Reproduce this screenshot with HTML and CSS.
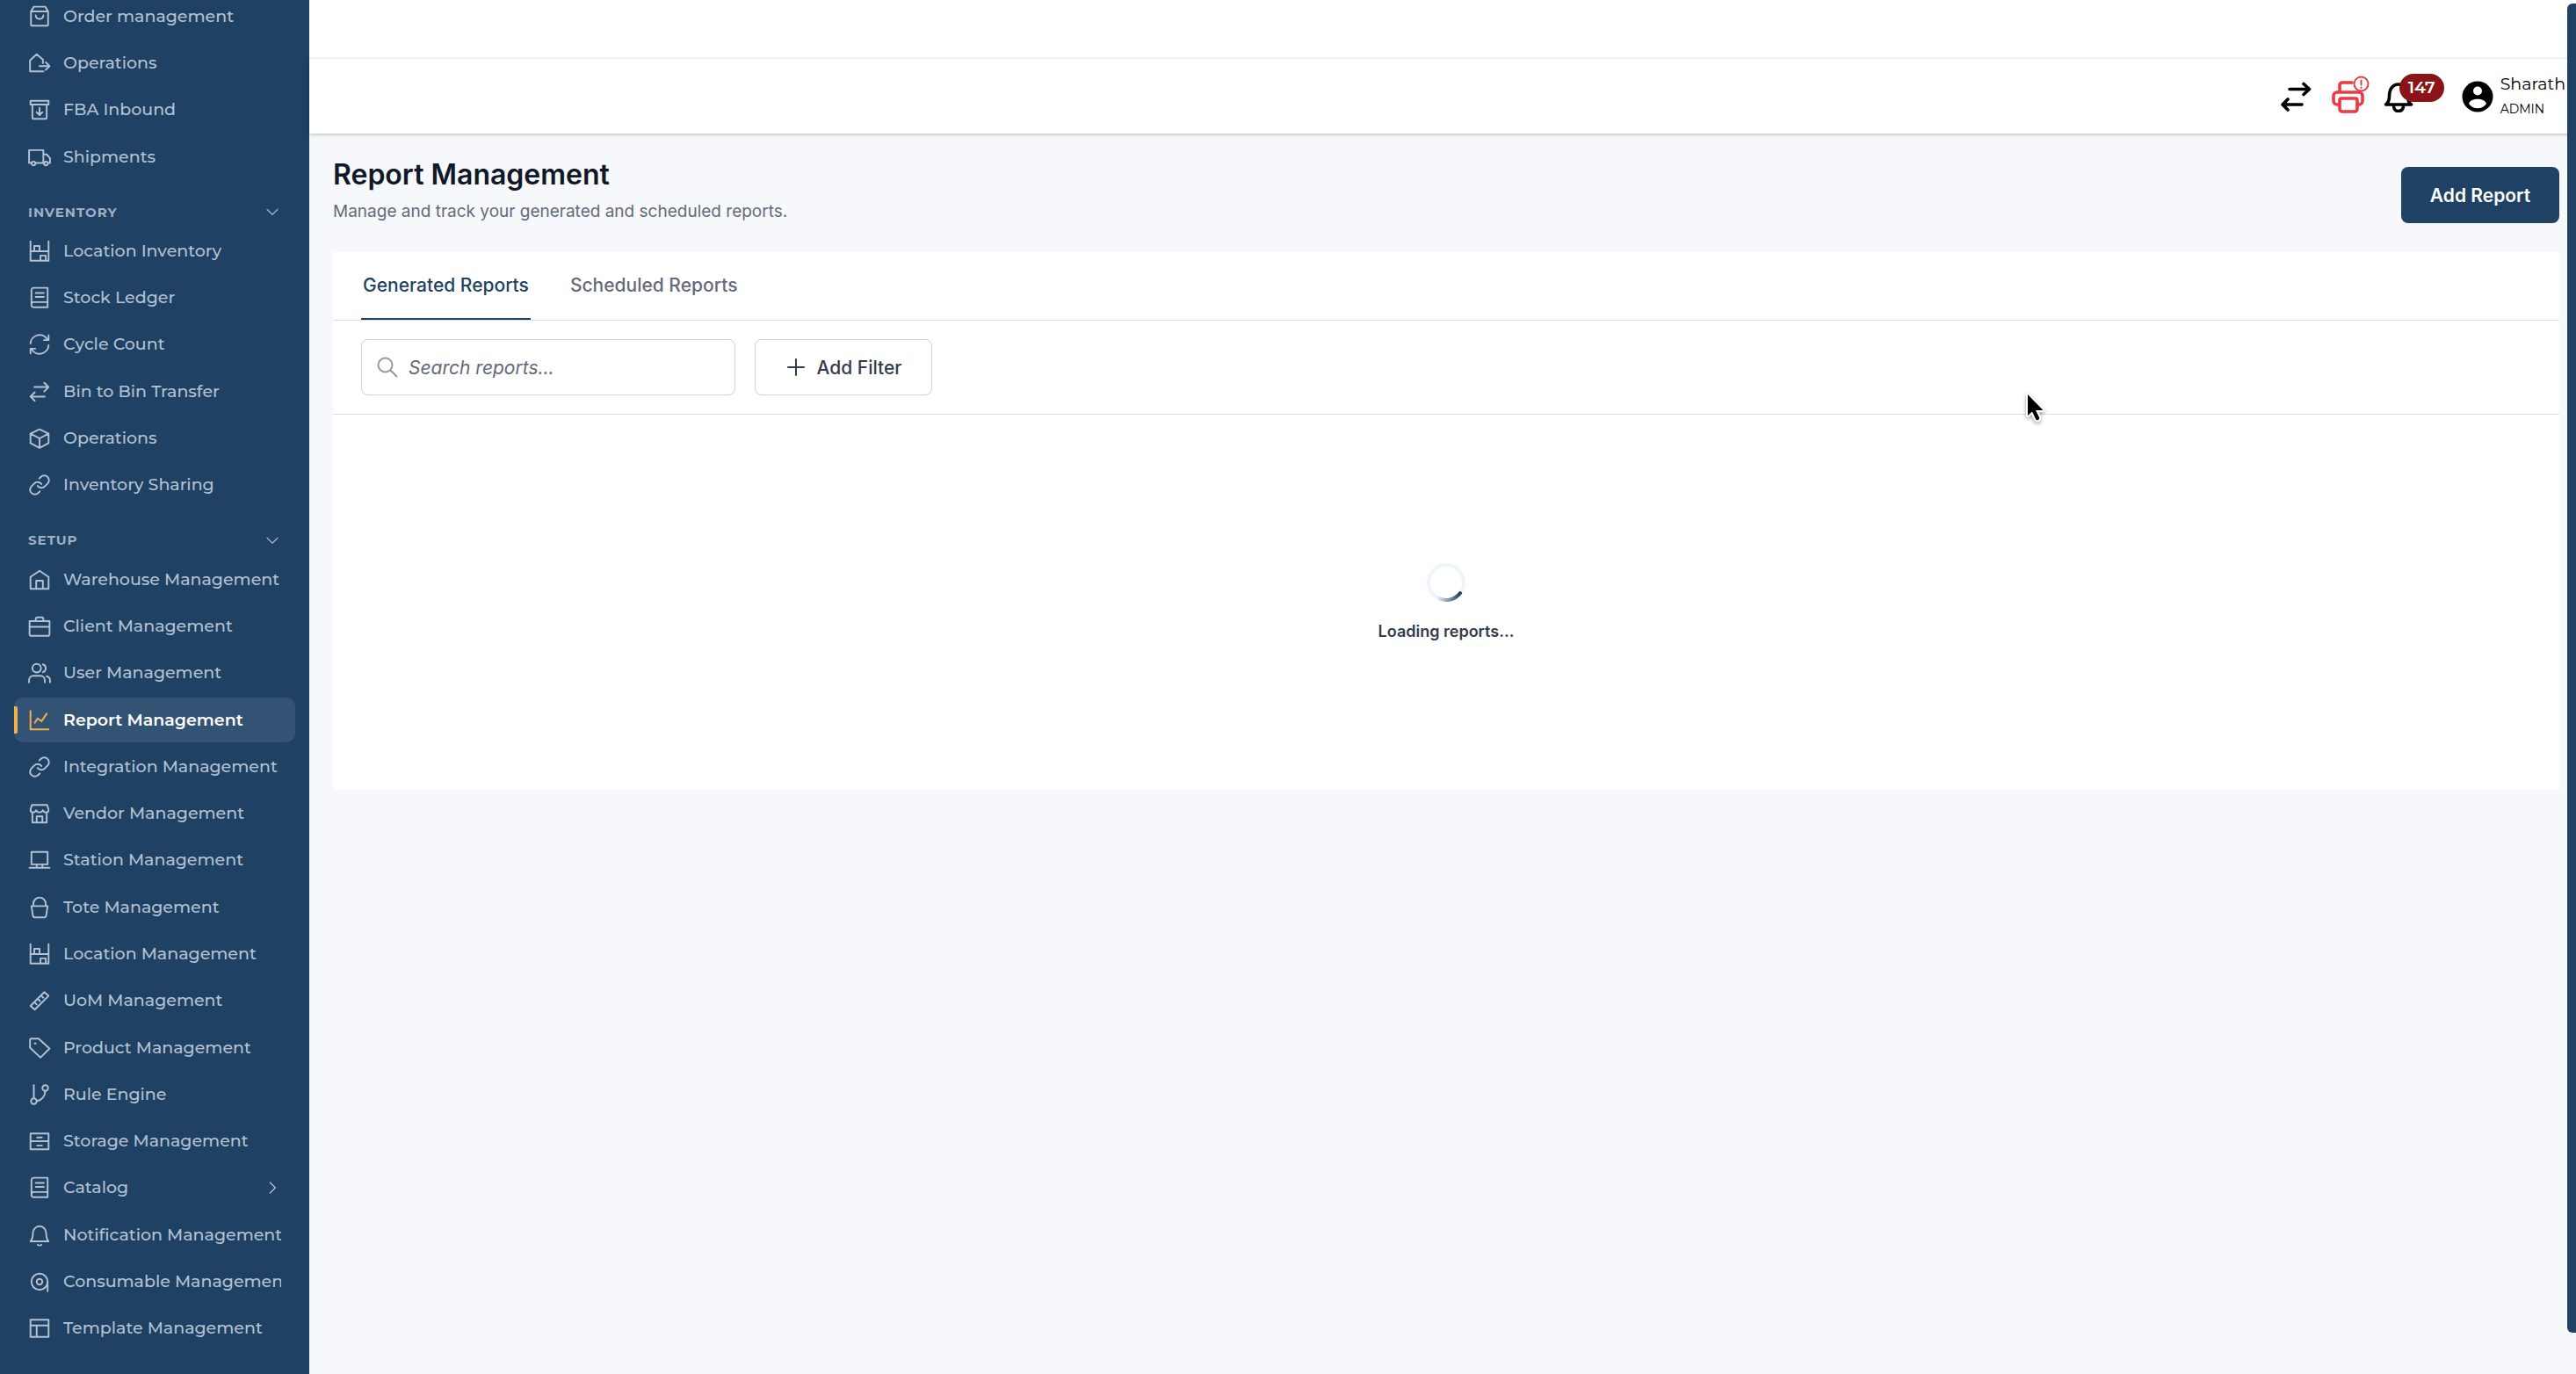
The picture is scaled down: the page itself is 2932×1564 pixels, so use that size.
FILE: index.html
```html
<!DOCTYPE html>
<html lang="en">
<head>
<meta charset="utf-8">
<meta name="viewport" content="width=device-width, initial-scale=1">
<title>Report Management</title>
<link rel="stylesheet" href="styles.css">
</head>
<body>
<svg class="sprite" aria-hidden="true">
  <symbol id="i-bag" viewBox="0 0 24 24"><path d="M3 6.500V20a1.500 1.500 0 0 0 1.500 1.500h15a1.500 1.500 0 0 0 1.500-1.500V6.500zM3 6.500l3-5h12l3 5M8 10.500c0 5 8 5 8 0"/></symbol>
  <symbol id="i-house-out" viewBox="0 0 24 24"><path d="M16 20.500H2V9l7-6.500L15.500 8v4M12 15h10.500M18.500 11l4 4-4 4"/></symbol>
  <symbol id="i-inbound" viewBox="0 0 24 24"><path d="M2.500 2.500h19v4h-19zM4.500 6.500V20a1.500 1.500 0 0 0 1.500 1.500h12a1.500 1.500 0 0 0 1.500-1.500V6.500M12 10v7M9 14.500l3 3 3-3"/></symbol>
  <symbol id="i-truck" viewBox="0 0 24 24"><path d="M4 18H1V4.500h15V18H7.500M16 9h3.500l3.500 4v5h-2M17.500 18H16"/><circle cx="5.700" cy="18.500" r="2"/><circle cx="18.700" cy="18.500" r="2"/></symbol>
  <symbol id="i-rack" viewBox="0 0 24 24"><path d="M2.500 1.500v20.500h19V1.500M2.500 12h19M6.500 12V6.500h5.500V12M13 22v-5.500h5.500V22"/></symbol>
  <symbol id="i-book" viewBox="0 0 24 24"><path d="M20.500 16.500H6a2.500 2.500 0 0 0-2.500 2.500V4A2.500 2.500 0 0 1 6 1.500h14.500zM3.500 19A2.500 2.500 0 0 0 6 22h14.500v-5.500M8 7h8.500M8 11h8.500"/></symbol>
  <symbol id="i-cycle" viewBox="0 0 24 24"><path d="M2.500 11a9.500 9.500 0 0 1 17.500-4.500M21.500 13A9.500 9.500 0 0 1 4 17.500M21.500 2.500v5h-5M2.500 21.500v-5h5"/></symbol>
  <symbol id="i-swap" viewBox="0 0 24 24"><path d="M6.500 7h15M17 2.500 21.500 7 17 11.500M17.500 17h-15M7 12.500 2.500 17 7 21.500"/></symbol>
  <symbol id="i-box" viewBox="0 0 24 24"><path d="M12 2.500l9.500 4.500v10L12 22l-9.500-5V7zM2.500 7l9.500 5 9.500-5M12 12v10"/></symbol>
  <symbol id="i-link" viewBox="0 0 24 24"><path d="M10 13a5 5 0 0 0 7.540.540l3-3a5 5 0 0 0-7.070-7.070l-1.720 1.710M14 11a5 5 0 0 0-7.540-.540l-3 3a5 5 0 0 0 7.070 7.070l1.710-1.710"/></symbol>
  <symbol id="i-home" viewBox="0 0 24 24"><path d="M2.500 9 12 2.500 21.500 9v12.500h-19zM8.500 21.500V13h7v8.500"/></symbol>
  <symbol id="i-case" viewBox="0 0 24 24"><path d="M1.500 6.500h21V20a2 2 0 0 1-2 2h-17a2 2 0 0 1-2-2zM1.500 12.500h21M8 6.500V4a1.500 1.500 0 0 1 1.500-1.500h5A1.500 1.500 0 0 1 16 4v2.500"/></symbol>
  <symbol id="i-users" viewBox="0 0 24 24"><circle cx="9" cy="7" r="4.500"/><path d="M1 22v-2.500a4.500 4.500 0 0 1 4.500-4.500h7.500a4.500 4.500 0 0 1 4.500 4.500V22M15.500 3a4.300 4.300 0 0 1 0 8.200M19.500 15.500a4.500 4.500 0 0 1 3.500 4.500v2"/></symbol>
  <symbol id="i-chart" viewBox="0 0 24 24"><path d="M2.500 2v19.500h19M7 14.500l3-4.500 4 3L19.500 5"/></symbol>
  <symbol id="i-store" viewBox="0 0 24 24"><path d="M4 3h16l1.500 5c0 3.500-4.500 4-6 .500-1 3-6 3-7 0-1.500 3.500-6 3-6-.500zM4.500 11v10.500h15V11M9 21.500V15h6v6.500"/></symbol>
  <symbol id="i-station" viewBox="0 0 24 24"><path d="M3.500 3.500h17v13h-17zM1.500 20h21M9 16.500V20M15 16.500V20"/></symbol>
  <symbol id="i-tote" viewBox="0 0 24 24"><path d="M3.500 10.500h17L19 20.500a2 2 0 0 1-2 1.800H7a2 2 0 0 1-2-1.800zM5.500 10.500V8a6.500 6.500 0 0 1 13 0v2.500"/></symbol>
  <symbol id="i-ruler" viewBox="0 0 24 24"><path d="M2.500 17.500 17 3l4.500 4L7 21.500zM7 14l2 2M10.500 10.500l2 2M14 7l2 2"/></symbol>
  <symbol id="i-tag" viewBox="0 0 24 24"><path d="M2 3.500A1.500 1.500 0 0 1 3.500 2H11l11.500 10.500-9.500 9.500L2 11.500zM7 7.200h1"/></symbol>
  <symbol id="i-branch" viewBox="0 0 24 24"><path d="M6 2v14"/><circle cx="6" cy="19" r="3"/><circle cx="18" cy="5" r="3"/><path d="M18 8a11 11 0 0 1-9 11"/></symbol>
  <symbol id="i-drawers" viewBox="0 0 24 24"><path d="M2.500 4h19v8h-19zM2.500 12h19v8.500h-19zM9.500 8h5M9.500 16.500h5"/></symbol>
  <symbol id="i-bell" viewBox="0 0 24 24"><path d="M2.500 18.500c2-2 2.500-4 2.500-8.500a7 7.500 0 0 1 14 0c0 4.500.500 6.500 2.500 8.500zM10 22c1 1 3 1 4 0"/></symbol>
  <symbol id="i-roll" viewBox="0 0 24 24"><circle cx="12" cy="12" r="8.500"/><circle cx="12" cy="12" r="3"/><path d="M20.500 12v10"/></symbol>
  <symbol id="i-layout" viewBox="0 0 24 24"><path d="M2.500 3h19v18h-19zM2.500 9h19M9 9v12"/></symbol>
  <symbol id="i-down" viewBox="0 0 24 24"><path d="M3 8l9 9 9-9"/></symbol>
  <symbol id="i-right" viewBox="0 0 24 24"><path d="M8 3l9 9-9 9"/></symbol>
</svg>

<div class="app">
  <nav class="sidebar" aria-label="Main">
    <ul class="nav-list nav-orders">
      <li><a class="nav-item" href="#"><svg><use href="#i-bag"/></svg><span>Order management</span></a></li>
      <li><a class="nav-item" href="#"><svg><use href="#i-house-out"/></svg><span>Operations</span></a></li>
      <li><a class="nav-item" href="#"><svg><use href="#i-inbound"/></svg><span>FBA Inbound</span></a></li>
      <li><a class="nav-item" href="#"><svg><use href="#i-truck"/></svg><span>Shipments</span></a></li>
    </ul>
    <button class="nav-heading" type="button" aria-expanded="true">INVENTORY<svg><use href="#i-down"/></svg></button>
    <ul class="nav-list nav-inventory">
      <li><a class="nav-item" href="#"><svg><use href="#i-rack"/></svg><span>Location Inventory</span></a></li>
      <li><a class="nav-item" href="#"><svg><use href="#i-book"/></svg><span>Stock Ledger</span></a></li>
      <li><a class="nav-item" href="#"><svg><use href="#i-cycle"/></svg><span>Cycle Count</span></a></li>
      <li><a class="nav-item" href="#"><svg><use href="#i-swap"/></svg><span>Bin to Bin Transfer</span></a></li>
      <li><a class="nav-item" href="#"><svg><use href="#i-box"/></svg><span>Operations</span></a></li>
      <li><a class="nav-item" href="#"><svg><use href="#i-link"/></svg><span>Inventory Sharing</span></a></li>
    </ul>
    <button class="nav-heading" type="button" aria-expanded="true">SETUP<svg><use href="#i-down"/></svg></button>
    <ul class="nav-list nav-setup">
      <li><a class="nav-item" href="#"><svg><use href="#i-home"/></svg><span>Warehouse Management</span></a></li>
      <li><a class="nav-item" href="#"><svg><use href="#i-case"/></svg><span>Client Management</span></a></li>
      <li><a class="nav-item" href="#"><svg><use href="#i-users"/></svg><span>User Management</span></a></li>
      <li><a class="nav-item active" href="#" aria-current="page"><svg><use href="#i-chart"/></svg><span>Report Management</span></a></li>
      <li><a class="nav-item" href="#"><svg><use href="#i-link"/></svg><span>Integration Management</span></a></li>
      <li><a class="nav-item" href="#"><svg><use href="#i-store"/></svg><span>Vendor Management</span></a></li>
      <li><a class="nav-item" href="#"><svg><use href="#i-station"/></svg><span>Station Management</span></a></li>
      <li><a class="nav-item" href="#"><svg><use href="#i-tote"/></svg><span>Tote Management</span></a></li>
      <li><a class="nav-item" href="#"><svg><use href="#i-rack"/></svg><span>Location Management</span></a></li>
      <li><a class="nav-item" href="#"><svg><use href="#i-ruler"/></svg><span>UoM Management</span></a></li>
      <li><a class="nav-item" href="#"><svg><use href="#i-tag"/></svg><span>Product Management</span></a></li>
      <li><a class="nav-item" href="#"><svg><use href="#i-branch"/></svg><span>Rule Engine</span></a></li>
      <li><a class="nav-item" href="#"><svg><use href="#i-drawers"/></svg><span>Storage Management</span></a></li>
      <li><a class="nav-item" href="#"><svg><use href="#i-book"/></svg><span>Catalog</span><svg class="chevron"><use href="#i-right"/></svg></a></li>
      <li><a class="nav-item" href="#"><svg><use href="#i-bell"/></svg><span>Notification Management</span></a></li>
      <li><a class="nav-item" href="#"><svg><use href="#i-roll"/></svg><span>Consumable Management</span></a></li>
      <li><a class="nav-item" href="#"><svg><use href="#i-layout"/></svg><span>Template Management</span></a></li>
    </ul>
  </nav>

  <div class="content">
    <div class="top-strip"></div>
    <header class="topbar">
      <button class="icon-btn" type="button" aria-label="Switch">
        <svg class="tool-icon" viewBox="0 0 36 36"><path d="M11 9.500H33M27 3.500l6.500 6-6.500 6M25 27H3M9 21l-6 6 6 6"/></svg>
      </button>
      <button class="icon-btn printer" type="button" aria-label="Printer">
        <svg class="printer-icon" viewBox="0 0 44 44"><path d="M10 19v-8a3 3 0 0 1 3-3h11M10 33H7a4 4 0 0 1-4-4v-6a4 4 0 0 1 4-4h25a4 4 0 0 1 4 4v6a4 4 0 0 1-4 4h-2M12 26h16a2 2 0 0 1 2 2v10a3 3 0 0 1-3 3H13a3 3 0 0 1-3-3V28a2 2 0 0 1 2-2z"/><circle class="thin" cx="34.500" cy="9.500" r="8"/><path class="thin" d="M34.500 5.500v5M34.500 13.500v.500"/></svg>
      </button>
      <button class="icon-btn" type="button" aria-label="Notifications">
        <svg class="tool-icon" viewBox="0 0 36 36"><path d="M3.500 27c3.500-2.500 4-5 4-9 0-9 4-14 10.500-14s10.500 5 10.500 14c0 4 .500 6.500 4 9zM12.500 29a5.500 5.500 0 0 0 11 0"/></svg>
        <span class="badge">147</span>
      </button>
      <button class="profile" type="button">
        <svg class="avatar" viewBox="0 0 36 36"><circle cx="18" cy="18" r="17.500"/><circle class="face" cx="18" cy="11.500" r="5"/><path class="face" d="M8 26c2-7 18-7 20 0-4.500 7-15.500 7-20 0z"/></svg>
        <span class="who"><span class="name">Sharath</span><span class="role">ADMIN</span></span>
      </button>
    </header>

    <main class="page">
      <div class="page-head">
        <div>
          <h1>Report Management</h1>
          <p>Manage and track your generated and scheduled reports.</p>
        </div>
        <button class="primary" type="button">Add Report</button>
      </div>
      <section class="card">
        <div class="tabs" role="tablist">
          <button class="tab selected" type="button" role="tab" aria-selected="true">Generated Reports</button>
          <button class="tab" type="button" role="tab" aria-selected="false">Scheduled Reports</button>
        </div>
        <div class="filters">
          <label class="search">
            <svg viewBox="0 0 24 24"><circle cx="9.500" cy="9.500" r="8"/><path d="M15.500 15.500l7 7"/></svg>
            <input type="text" placeholder="Search reports..." aria-label="Search reports">
          </label>
          <button class="add-filter" type="button"><svg viewBox="0 0 24 24"><path d="M12 3v18M3 12h18"/></svg>Add Filter</button>
        </div>
        <div class="loading" role="status">
          <svg class="spinner" viewBox="0 0 44 44">
            <defs><linearGradient id="arc" x1="0" x2="1"><stop offset="0" stop-color="#1e4164" stop-opacity="0"/><stop offset="1" stop-color="#1e4164"/></linearGradient></defs>
            <circle cx="22" cy="22" r="20"/><path d="M11 38.700A20 20 0 0 0 38 34"/>
          </svg>
          <span>Loading reports...</span>
        </div>
      </section>
    </main>
  </div>
</div>
<div class="scroll-thumb"></div>
<svg class="pointer" viewBox="0 0 28 40"><path d="M4 4v24l5-4.500 4 8.500c1.500 2.500 5 1 4-2l-4-8h8.500z"/></svg>
</body>
</html>
```
FILE: styles.css
```css
:root {
  --navy: #1e4164;
  --line: #dddfe4;
  --ui: Inter, "Liberation Sans", sans-serif;
  --brand: Montserrat, Inter, "Liberation Sans", sans-serif;
}

* { box-sizing: border-box; }

body {
  margin: 0;
  font-family: var(--ui);
  background: #f6f8fc;
  color: #111827;
}

button {
  font: inherit;
  color: inherit;
  border: 0;
  background: none;
  padding: 0;
  cursor: pointer;
}

svg {
  flex: none;
  fill: none;
  stroke: currentColor;
  stroke-linecap: round;
  stroke-linejoin: round;
}

.sprite { position: absolute; width: 0; height: 0; }

.app {
  display: flex;
  height: 100vh;
  overflow: hidden;
}

/* Sidebar: lists share spare height in proportion to their rows */
.sidebar {
  flex: none;
  display: flex;
  flex-direction: column;
  width: 352px;
  margin-top: -8px;
  padding: 0 16px 25px;
  background: var(--navy);
  font-family: var(--brand);
}

.nav-list {
  display: flex;
  flex-direction: column;
  margin: 0;
  padding: 0;
  list-style: none;
}

.nav-list li {
  display: flex;
  flex: 1 0 53px;
  padding: 1px 0;
}

.nav-orders { flex: 4 0 auto; }
.nav-inventory { flex: 6 0 auto; }
.nav-setup { flex: 17 0 auto; }

.nav-item {
  position: relative;
  flex: 1;
  min-width: 0;
  display: flex;
  align-items: center;
  gap: 14px;
  padding: 0 16px;
  border-radius: 10px;
  color: #b4c1d2;
  font-size: 19px;
  font-weight: 500;
  text-decoration: none;
}

.nav-item span {
  flex: 1;
  overflow: hidden;
  line-height: 28px;
  white-space: nowrap;
}

.nav-item svg { width: 26px; height: 26px; stroke-width: 1.8; }

.nav-item .chevron { width: 16px; height: 16px; margin-right: 2px; stroke-width: 2; }

.nav-item.active {
  background: #335375;
  color: #fff;
  font-weight: 600;
}

.nav-item.active svg { color: #f2b04c; }

.nav-item.active::before {
  content: "";
  position: absolute;
  left: 0;
  top: 10px;
  bottom: 10px;
  width: 4px;
  border-radius: 0 2px 2px 0;
  background: #f2b04c;
}

.nav-heading {
  flex: none;
  display: flex;
  align-items: center;
  justify-content: space-between;
  height: 54px;
  padding: 18px 18px 0 16px;
  color: #a1b0c4;
  font-size: 15px;
  font-weight: 700;
  letter-spacing: 1px;
}

.nav-heading svg { width: 16px; height: 16px; stroke-width: 2; }

/* Header */
.content {
  flex: 1;
  min-width: 0;
  display: flex;
  flex-direction: column;
}

.top-strip {
  flex: none;
  height: 67px;
  background: #fff;
  border-bottom: 1px solid #f8f8f9;
}

.topbar {
  flex: none;
  display: flex;
  align-items: center;
  justify-content: flex-end;
  height: 85px;
  padding-right: 12px;
  background: #fff;
  box-shadow: 0 1px 4px rgba(0, 0, 0, 0.25);
  color: #000;
  font-family: var(--brand);
}

.icon-btn { display: flex; position: relative; }

.tool-icon { width: 36px; height: 36px; stroke-width: 3.6; }

.printer { margin: 0 15px 0 22px; color: #ea3a44; }

.printer-icon { width: 44px; height: 44px; margin-bottom: 4px; stroke-width: 3.6; }

.printer-icon .thin { fill: #fff; stroke-width: 2; }

.badge {
  position: absolute;
  left: 19px;
  top: -8px;
  width: 51px;
  border-radius: 16px;
  background: #8b1418;
  color: #fff;
  font-size: 19px;
  font-weight: 600;
  line-height: 32px;
  text-align: center;
}

.profile {
  display: flex;
  align-items: center;
  gap: 8px;
  margin-left: 54px;
  text-align: left;
}

.avatar { width: 36px; height: 36px; fill: #000; stroke: none; }

.avatar .face { fill: #fff; }

.who { display: flex; flex-direction: column; }

.name { font-size: 19px; line-height: 28px; }

.role { font-size: 14px; line-height: 28px; }

/* Page */
.page { padding: 25px 19px 24px 27px; }

.page-head {
  display: flex;
  align-items: flex-start;
  justify-content: space-between;
  min-height: 110px;
}

h1 {
  margin: 0;
  font-size: 32px;
  font-weight: 600;
  line-height: 44px;
}

.page-head p {
  margin: 6px 0 0;
  color: #646a79;
  font-size: 19px;
  line-height: 28px;
}

.primary {
  width: 180px;
  height: 64px;
  margin-top: 13px;
  border-radius: 8px;
  background: var(--navy);
  color: #fff;
  font-size: 21px;
  font-weight: 600;
}

.card { background: #fff; }

.tabs {
  display: flex;
  gap: 43px;
  height: 78px;
  padding: 0 32px;
  border-bottom: 1px solid var(--line);
}

.tab {
  padding: 0 2px;
  border-bottom: 2px solid transparent;
  color: #646a79;
  font-size: 21px;
  font-weight: 500;
}

.tab.selected { border-color: var(--navy); color: var(--navy); }

.filters {
  display: flex;
  gap: 22px;
  padding: 21px 32px;
  border-bottom: 1px solid var(--line);
}

.search {
  display: flex;
  align-items: center;
  gap: 12px;
  width: 426px;
  height: 64px;
  padding: 0 17px;
  border: 1px solid #cfd2d9;
  border-radius: 8px;
}

.search svg { width: 24px; height: 24px; color: #9297a3; stroke-width: 2; }

.search input {
  flex: 1;
  min-width: 0;
  padding: 0;
  border: 0;
  outline: 0;
  background: none;
  font: 21px var(--ui);
}

.search input::placeholder { color: #646a79; font-style: italic; }

.add-filter {
  display: flex;
  align-items: center;
  justify-content: center;
  gap: 12px;
  width: 202px;
  height: 64px;
  border: 1px solid #cfd2d9;
  border-radius: 8px;
  color: #333c4b;
  font-size: 21px;
  font-weight: 500;
}

.add-filter svg { width: 24px; height: 24px; stroke-width: 2; }

.loading {
  display: flex;
  flex-direction: column;
  align-items: center;
  gap: 21px;
  padding: 169px 0 167px;
  color: #333c4b;
  font-size: 18px;
  font-weight: 600;
  line-height: 26px;
}

.spinner { width: 44px; height: 44px; stroke-width: 4; }

.spinner circle { stroke: #edf4fc; }

.spinner path { stroke: url(#arc); }

.scroll-thumb {
  position: fixed;
  top: 4px;
  right: 0;
  bottom: 47px;
  width: 10px;
  border-radius: 6px 0 0 6px;
  background: var(--navy);
}

.pointer {
  position: fixed;
  left: 2304px;
  top: 445px;
  width: 28px;
  height: 40px;
  fill: #000;
  stroke: #fff;
  stroke-width: 4;
  paint-order: stroke;
  filter: drop-shadow(0 2px 2px rgba(0, 0, 0, 0.35));
}
```
